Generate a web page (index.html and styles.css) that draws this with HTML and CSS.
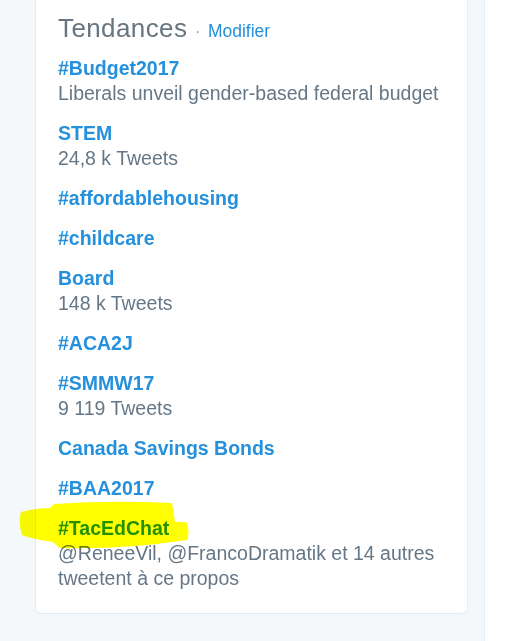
FILE: index.html
```html
<!DOCTYPE html>
<html lang="fr">
<head>
<meta charset="utf-8">
<title>Tendances</title>
<link rel="stylesheet" href="styles.css">
</head>
<body>
<div class="page">
  <div class="main">
    <section class="card">
      <h2 class="card-title">Tendances <span class="sep">·</span> <a class="edit" href="#">Modifier</a></h2>
      <ul class="trends">
        <li class="trend"><a class="tag" href="#">#Budget2017</a><p class="desc">Liberals unveil gender-based federal budget</p></li>
        <li class="trend"><a class="tag" href="#">STEM</a><p class="desc">24,8 k Tweets</p></li>
        <li class="trend"><a class="tag" href="#">#affordablehousing</a></li>
        <li class="trend"><a class="tag" href="#">#childcare</a></li>
        <li class="trend"><a class="tag" href="#">Board</a><p class="desc">148 k Tweets</p></li>
        <li class="trend"><a class="tag" href="#">#ACA2J</a></li>
        <li class="trend"><a class="tag" href="#">#SMMW17</a><p class="desc">9 119 Tweets</p></li>
        <li class="trend"><a class="tag" href="#">Canada Savings Bonds</a></li>
        <li class="trend"><a class="tag" href="#">#BAA2017</a></li>
        <li class="trend"><a class="tag" href="#">#TacEdChat</a><p class="desc">@ReneeVil, @FrancoDramatik et 14 autres tweetent à ce propos</p></li>
      </ul>
    </section>
  </div>
  <div class="side"></div>
</div>
<svg class="marker" width="508" height="641" viewBox="0 0 508 641" aria-hidden="true">
  <path d="M21,512 Q36,508 50,508 L54,504 Q110,500 172,503 L175,522 Q182,521 187,523 Q190,532 187,540 Q120,550 60,548 L53,542 Q32,539 22,535 Q18,523 21,512 Z" fill="#ffff00"/>
</svg>
</body>
</html>
```

FILE: styles.css
```css
html, body {
  margin: 0;
  padding: 0;
}
body {
  background: #f5f8fa;
  font-family: "Liberation Sans", Arial, sans-serif;
  width: 508px;
  height: 641px;
  overflow: hidden;
  position: relative;
}
.page {
  display: flex;
  height: 641px;
}
.main {
  width: 484px;
  padding-left: 35px;
  box-sizing: border-box;
}
.side {
  flex: 1;
  background: #ffffff;
  border-left: 1px solid #e6ecf0;
}
.card {
  width: 433px;
  box-sizing: border-box;
  background: #ffffff;
  border: 1px solid #e6ecf0;
  border-top: none;
  border-radius: 0 0 6px 6px;
  padding: 13px 22px 22px 22px;
}
.card-title {
  margin: 0;
  font-weight: normal;
  font-size: 26px;
  letter-spacing: 0.4px;
  line-height: 30px;
  color: #66757f;
}
.sep {
  font-size: 16px;
  letter-spacing: 0;
  color: #8899a6;
}
.edit {
  font-size: 17.5px;
  letter-spacing: 0;
  color: #2590dc;
  text-decoration: none;
}
.trends {
  list-style: none;
  margin: 9px 0 0 0;
  padding: 0;
  display: flex;
  flex-direction: column;
  gap: 15px;
}
.trend {
  display: flex;
  flex-direction: column;
}
.tag {
  font-weight: bold;
  font-size: 19.5px;
  line-height: 25px;
  color: #2590dc;
  text-decoration: none;
}
.desc {
  margin: 0;
  font-size: 19.5px;
  line-height: 25px;
  color: #657786;
}
.marker {
  position: absolute;
  left: 0;
  top: 0;
  pointer-events: none;
  mix-blend-mode: multiply;
}
```
